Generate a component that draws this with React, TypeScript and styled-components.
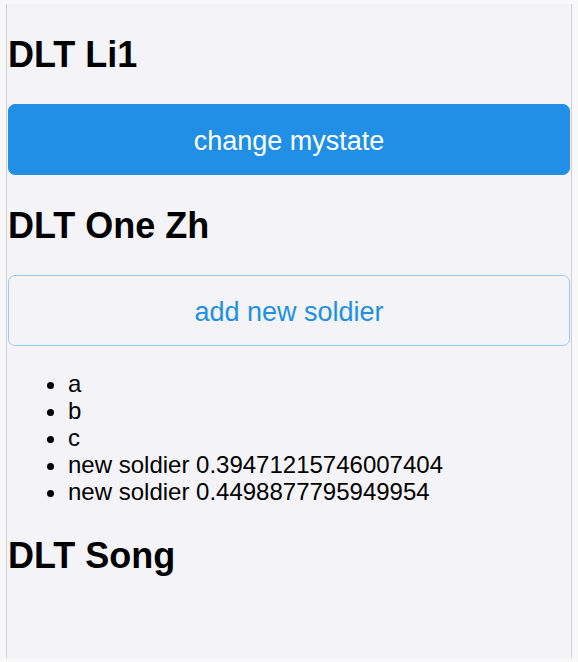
import React, { useState } from "react";
import styled, { createGlobalStyle } from "styled-components";

const GlobalStyle = createGlobalStyle`
  html, body {
    margin: 0;
    padding: 0;
    background: #f8f8f8;
    font-family: "Liberation Sans", Arial, Helvetica, sans-serif;
  }
`;

const Frame = styled.div`
  padding: 4px 0 4px 6px;
  height: 662px;
  box-sizing: border-box;
`;

const Panel = styled.div`
  display: flow-root;
  box-sizing: border-box;
  width: 566px;
  height: 654px;
  padding: 0 1px;
  background: #f4f4f8;
  border-left: 1px solid #d2d2d6;
  border-right: 1px solid #d2d2d6;
  color: #000;
`;

const Heading = styled.h2`
  margin: 30px 0;
  padding-top: 1px;
  font-size: 36px;
  font-weight: bold;
  line-height: 39px;
`;

const Button = styled.button<{ $ghost?: boolean }>`
  display: flex;
  align-items: center;
  justify-content: center;
  width: 100%;
  height: 71px;
  margin: 0;
  padding: 3px 0 0;
  box-sizing: border-box;
  border-radius: 7px;
  font-family: inherit;
  font-size: 27px;
  cursor: pointer;
  background: ${(p) => (p.$ghost ? "transparent" : "#208fe5")};
  color: ${(p) => (p.$ghost ? "#1d90e6" : "#fff")};
  border: 1px solid ${(p) => (p.$ghost ? "#9ccbf2" : "#208fe5")};
`;

const List = styled.ul`
  margin: 24px 0;
  padding-left: 60px;
  font-size: 24px;
  line-height: 27px;
`;

const Item = styled.li``;

export default function App() {
  const [soldiers] = useState<string[]>([
    "a",
    "b",
    "c",
    "new soldier 0.39471215746007404",
    "new soldier 0.4498877795949954",
  ]);
  return (
    <>
      <GlobalStyle />
      <Frame>
        <Panel>
          <Heading>DLT Li1</Heading>
          <Button>change mystate</Button>
          <Heading>DLT One Zh</Heading>
          <Button $ghost>add new soldier</Button>
          <List>
            {soldiers.map((s) => (
              <Item key={s}>{s}</Item>
            ))}
          </List>
          <Heading>DLT Song</Heading>
        </Panel>
      </Frame>
    </>
  );
}
